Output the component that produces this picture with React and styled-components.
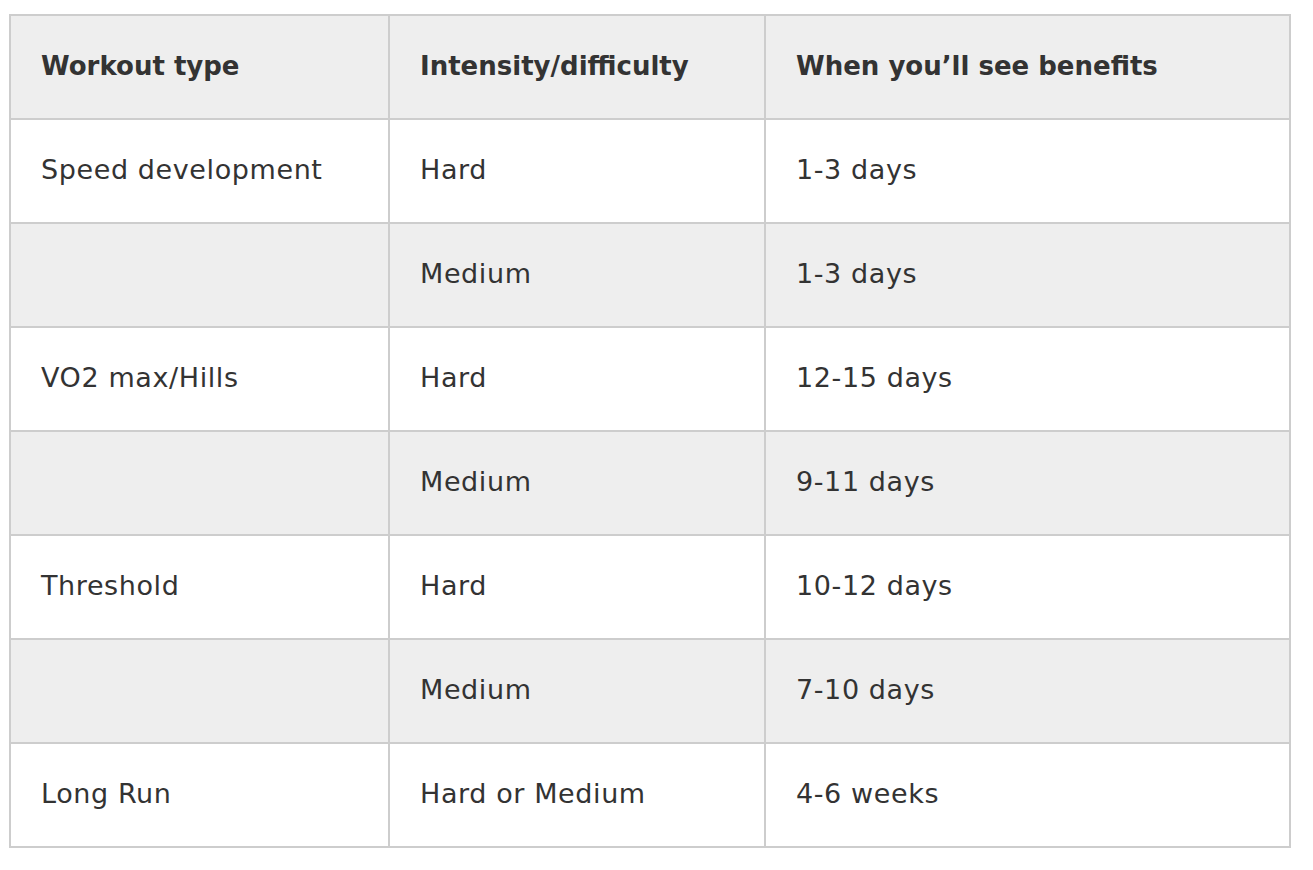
import React from "react";
import styled, { createGlobalStyle } from "styled-components";

const Global = createGlobalStyle`
  html, body { margin: 0; padding: 0; background: #fff; }
  body { font-family: "DejaVu Sans", "Open Sans", sans-serif; color: #333; }
`;

const Wrapper = styled.div`
  padding: 14px 0 0 9px;
`;

const Table = styled.table`
  border-collapse: separate;
  border-spacing: 0;
  table-layout: fixed;
  width: 1282px;
  border-top: 2px solid #cdcdcd;
  border-left: 2px solid #cdcdcd;
`;

const Row = styled.tr`
  background: ${(p) => (p.$shaded ? "#eeeeee" : "#ffffff")};
`;

const Cell = styled.td`
  height: 104px;
  padding: 0 0 4px 30px;
  box-sizing: border-box;
  border-right: 2px solid #cdcdcd;
  border-bottom: 2px solid #cdcdcd;
  font-size: 27px;
  font-weight: 400;
  color: #333;
  vertical-align: middle;
  white-space: nowrap;
  letter-spacing: 0.6px;
`;

const HeadCell = styled(Cell).attrs({ as: "th" })`
  text-align: left;
  font-size: 26px;
  font-weight: 700;
  letter-spacing: 0;
  padding-bottom: 2px;
`;

const rows = [
  ["Speed development", "Hard", "1-3 days"],
  ["", "Medium", "1-3 days"],
  ["VO2 max/Hills", "Hard", "12-15 days"],
  ["", "Medium", "9-11 days"],
  ["Threshold", "Hard", "10-12 days"],
  ["", "Medium", "7-10 days"],
  ["Long Run", "Hard or Medium", "4-6 weeks"],
];

export default function App() {
  return (
    <>
      <Global />
      <Wrapper>
        <Table>
          <colgroup>
            <col style={{ width: 379 }} />
            <col style={{ width: 376 }} />
            <col style={{ width: 525 }} />
          </colgroup>
          <thead>
            <Row $shaded>
              <HeadCell>Workout type</HeadCell>
              <HeadCell>Intensity/difficulty</HeadCell>
              <HeadCell>When you’ll see benefits</HeadCell>
            </Row>
          </thead>
          <tbody>
            {rows.map((r, i) => (
              <Row key={i} $shaded={i % 2 === 1}>
                {r.map((c, j) => (
                  <Cell key={j}>{c}</Cell>
                ))}
              </Row>
            ))}
          </tbody>
        </Table>
      </Wrapper>
    </>
  );
}
